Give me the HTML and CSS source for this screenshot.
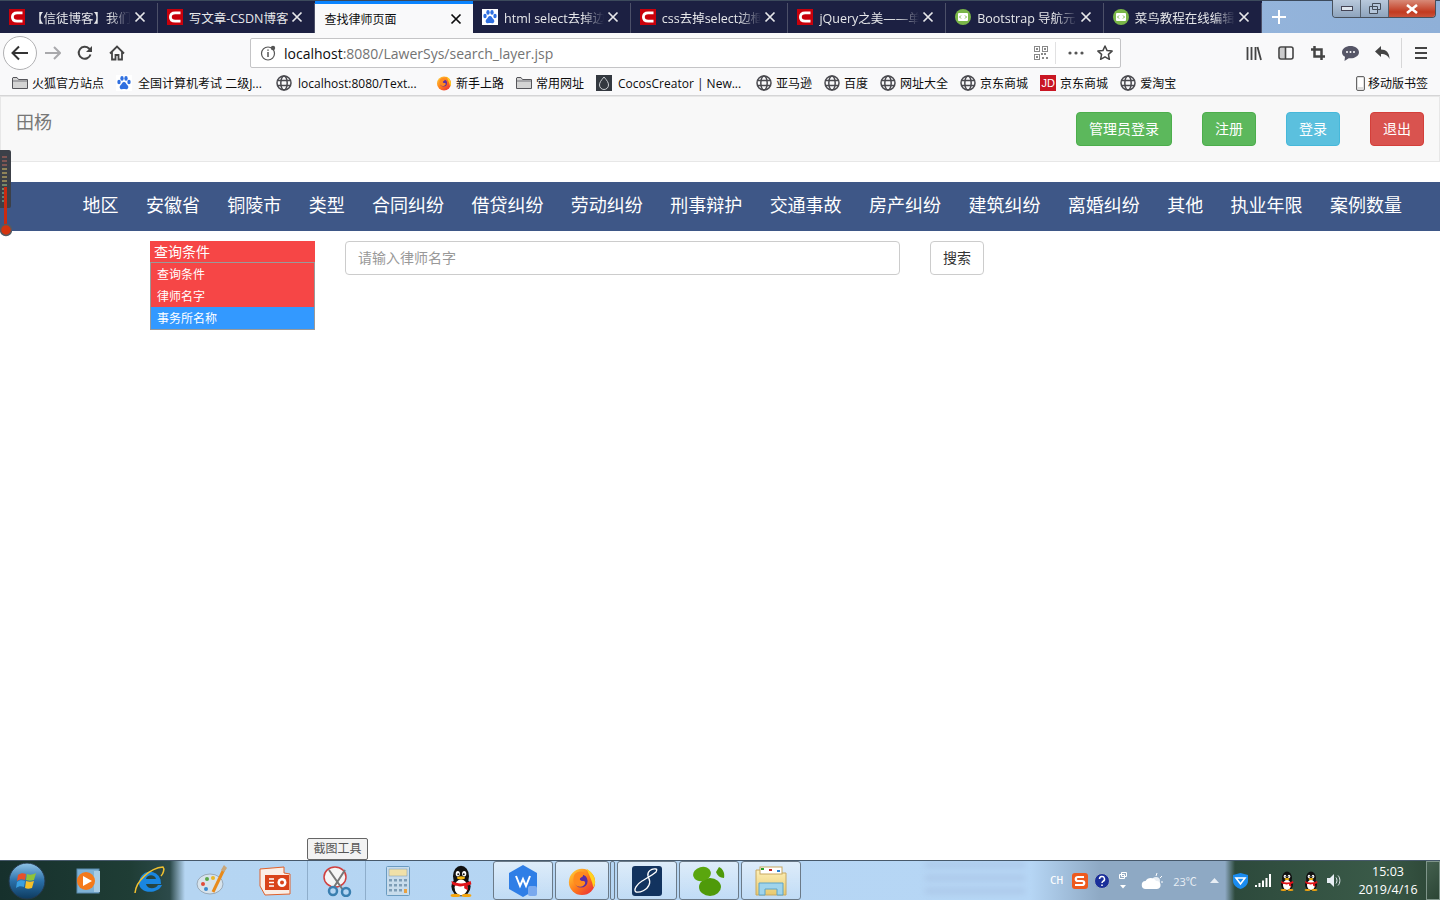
FILE: index.html
```html
<!DOCTYPE html>
<html lang="en">
<head>
    <meta charset="UTF-8">
    <title>查找律师页面</title>
    <link rel="stylesheet" href="styles.css">
</head>
<body>
    <svg class="sprite" xmlns="http://www.w3.org/2000/svg">
        <defs>
            <linearGradient id="orbGrad" x1="0" y1="0" x2="0" y2="1"><stop offset="0" stop-color="#8fc4e8"/><stop offset=".5" stop-color="#2a6fa8"/><stop offset="1" stop-color="#0d3a5e"/></linearGradient>
            <linearGradient id="foxGrad" x1="0" y1="0" x2="1" y2="1"><stop offset="0" stop-color="#ffd83a"/><stop offset=".5" stop-color="#ff7a1a"/><stop offset="1" stop-color="#e6213f"/></linearGradient>
            <linearGradient id="folderGrad" x1="0" y1="0" x2="0" y2="1"><stop offset="0" stop-color="#fdf0b8"/><stop offset="1" stop-color="#e8c96e"/></linearGradient>
        </defs>
        <symbol id="close" viewBox="0 0 12 12"><path d="M1.500 1.500l9 9M10.500 1.500l-9 9" fill="none" stroke="currentColor" stroke-width="1.700"/></symbol>
        <symbol id="csdn" viewBox="0 0 16 16"><rect width="16" height="16" fill="#c9000b"/><path d="M13.500 3.800H8.200C5 3.800 3.400 5.600 3.400 8s1.600 4.200 4.800 4.200h5.300" fill="none" stroke="#fff" stroke-width="2.800"/></symbol>
        <symbol id="paw" viewBox="0 0 16 16"><rect width="16" height="16" fill="#fff"/><g fill="#2f6fe0"><ellipse cx="3" cy="7" rx="1.700" ry="2.200"/><ellipse cx="6" cy="3.400" rx="1.700" ry="2.300"/><ellipse cx="10" cy="3.400" rx="1.700" ry="2.300"/><ellipse cx="13" cy="7" rx="1.700" ry="2.200"/><path d="M8 7c-2 0-2 2-3.500 3.200C3 11.500 3.600 14.500 6 14.200c1.200-.2 2.800-.2 4 0 2.400.3 3-2.700 1.500-4C10 9 10 7 8 7z"/></g></symbol>
        <symbol id="runoob" viewBox="0 0 16 16"><circle cx="8" cy="8" r="8" fill="#7ab648"/><rect x="3" y="4" width="10" height="8" rx="1" fill="#fff"/><path d="M6 6.500 4.500 8 6 9.500M10 6.500 11.500 8 10 9.500" fill="none" stroke="#7ab648"/></symbol>
        <symbol id="globe" viewBox="0 0 16 16"><g fill="none" stroke="#4a4a4f" stroke-width="1.500"><circle cx="8" cy="8" r="7"/><ellipse cx="8" cy="8" rx="3.200" ry="7"/><path d="M1.500 5.500h13M1.500 10.500h13"/></g></symbol>
        <symbol id="folder" viewBox="0 0 16 16"><path d="M.5 3V13.500h15V4.500H6.500L5 2.500H1z" fill="#d4d4d4" stroke="#55555a"/><path d="M1 6h14" stroke="#77777c"/></symbol>
        <symbol id="firefox" viewBox="0 0 32 32"><circle cx="16" cy="17" r="14" fill="url(#foxGrad)"/><path d="M21 3c5 3 9 8 9 14 0 2-1 5-2 6-1-7-4-12-7-20z" fill="#ffd21f"/><circle cx="15" cy="16" r="7" fill="#5b2fa3"/><path d="M9 8c3-3 8-3 11 0-2 0-3 1-3 3l-3 2c-1 2 1 3 4 3 3 1 1 6-4 6-5 0-8-4-7-9 0-2 1-4 2-5z" fill="#ff8a1e"/></symbol>
        <symbol id="qq" viewBox="0 0 32 40"><ellipse cx="16" cy="14" rx="10" ry="13" fill="#111"/><ellipse cx="16" cy="27" rx="12" ry="12" fill="#111"/><ellipse cx="16" cy="28" rx="8" ry="10" fill="#fff"/><ellipse cx="12" cy="11" rx="2.600" ry="3.400" fill="#fff"/><ellipse cx="20" cy="11" rx="2.600" ry="3.400" fill="#fff"/><circle cx="12.500" cy="11.500" r="1.200" fill="#111"/><circle cx="19.500" cy="11.500" r="1.200" fill="#111"/><ellipse cx="16" cy="16" rx="5" ry="2" fill="#f5b70f"/><path d="M4 20c8 4 16 4 24 0l1 4-5 2 1 6-5-3v-3c-4 1-6 1-9 0-3 0-5-1-6-2z" fill="#e0141a"/><ellipse cx="9" cy="38" rx="6" ry="2" fill="#f5a50f"/><ellipse cx="23" cy="38" rx="6" ry="2" fill="#f5a50f"/></symbol>
    </svg>

    <div class="tabstrip">
        <div class="tabs">
            <div class="tab"><svg class="favicon"><use href="#csdn"/></svg><span class="tab-title">【信徒博客】我们</span><svg class="tab-close"><use href="#close"/></svg></div>
            <div class="tab"><svg class="favicon"><use href="#csdn"/></svg><span class="tab-title plain">写文章-CSDN博客</span><svg class="tab-close"><use href="#close"/></svg></div>
            <div class="tab active"><span class="tab-title plain">查找律师页面</span><svg class="tab-close"><use href="#close"/></svg></div>
            <div class="tab"><svg class="favicon"><use href="#paw"/></svg><span class="tab-title">html select去掉边</span><svg class="tab-close"><use href="#close"/></svg></div>
            <div class="tab"><svg class="favicon"><use href="#csdn"/></svg><span class="tab-title">css去掉select边框</span><svg class="tab-close"><use href="#close"/></svg></div>
            <div class="tab"><svg class="favicon"><use href="#csdn"/></svg><span class="tab-title">jQuery之美——单</span><svg class="tab-close"><use href="#close"/></svg></div>
            <div class="tab"><svg class="favicon"><use href="#runoob"/></svg><span class="tab-title">Bootstrap 导航元</span><svg class="tab-close"><use href="#close"/></svg></div>
            <div class="tab"><svg class="favicon"><use href="#runoob"/></svg><span class="tab-title">菜鸟教程在线编辑</span><svg class="tab-close"><use href="#close"/></svg></div>
        </div>
        <div class="new-tab">
            <svg width="14" height="14" viewBox="0 0 14 14"><path d="M7 0v14M0 7h14" stroke="#fff" stroke-width="2"/></svg>
        </div>
        <div class="win-controls">
            <div class="win-btn"><svg width="12" height="6" viewBox="0 0 12 6"><rect x=".5" y=".5" width="11" height="4" fill="#dfe6ee" stroke="#445"/></svg></div>
            <div class="win-btn"><svg width="12" height="11" viewBox="0 0 12 11"><path d="M3.500.5h8v6h-8zM.5 3.500h8v7h-8z" fill="#b5c6da" stroke="#444c58"/></svg></div>
            <div class="win-btn close"><svg width="14" height="10" viewBox="0 0 14 10"><path d="M2 1l10 8M12 1 2 9" stroke="#fff" stroke-width="2.600"/></svg></div>
        </div>
    </div>

    <div class="toolbar">
        <div class="back-btn">
            <svg width="18" height="16" viewBox="0 0 18 16"><path d="M17 8H2M8 1.500 1.500 8 8 14.500" fill="none" stroke="#333" stroke-width="2"/></svg>
        </div>
        <div class="tool-btn">
            <svg width="16" height="14" viewBox="0 0 16 14"><path d="M0 7h14M9 1l6 6-6 6" fill="none" stroke="#a9a9ac" stroke-width="2"/></svg>
        </div>
        <div class="tool-btn">
            <svg width="16" height="16" viewBox="0 0 16 16"><path d="M13.500 9.500A6 6 0 1 1 12 3.500L14 6" fill="none" stroke="#444" stroke-width="2"/><path d="M15 1v6H9z" fill="#444"/></svg>
        </div>
        <div class="tool-btn">
            <svg width="16" height="16" viewBox="0 0 16 16"><path d="M1 8.500 8 1.500l7 7M3 7v7.500h3.500V10h3v4.500H13V7" fill="none" stroke="#444" stroke-width="1.800"/></svg>
        </div>
        <div class="urlbar">
            <svg class="info-icon" width="16" height="16" viewBox="0 0 16 16"><circle cx="8" cy="8.500" r="6.500" fill="none" stroke="#555" stroke-width="1.200"/><path d="M8 7v5M8 4.500v1.200" stroke="#555" stroke-width="1.500"/><circle cx="13" cy="3" r="2.200" fill="#555"/></svg>
            <div class="url"><span class="host">localhost</span>:8080/LawerSys/search_layer.jsp</div>
            <svg width="14" height="14" viewBox="0 0 14 14"><g fill="none" stroke="#888"><rect x=".5" y=".5" width="5" height="5"/><rect x="8.500" y=".5" width="5" height="5"/><rect x=".5" y="8.500" width="5" height="5"/></g><g fill="#888"><rect x="2" y="2" width="2" height="2"/><rect x="10" y="2" width="2" height="2"/><rect x="2" y="10" width="2" height="2"/><rect x="7" y="7" width="2" height="2"/><rect x="10" y="7" width="2" height="2"/><rect x="8" y="11" width="2" height="2"/><rect x="12" y="11" width="2" height="2"/></g></svg>
            <div class="url-sep"></div>
            <svg class="dots" width="16" height="4" viewBox="0 0 16 4"><circle cx="2" cy="2" r="1.600" fill="#555"/><circle cx="8" cy="2" r="1.600" fill="#555"/><circle cx="14" cy="2" r="1.600" fill="#555"/></svg>
            <svg width="16" height="16" viewBox="0 0 16 16"><path d="M8 1l2.100 4.600 5 .5-3.700 3.300 1 4.900L8 11.800l-4.400 2.500 1-4.900L.9 6.100l5-.5z" fill="none" stroke="#444" stroke-width="1.500" stroke-linejoin="round"/></svg>
        </div>
        <div class="tool-right">
            <div class="tool-btn"><svg width="16" height="15" viewBox="0 0 16 15"><path d="M1.500 1v13M5.500 1v13M9.500 1v13M11.500 1l3.500 13" stroke="#444" stroke-width="1.800" fill="none"/></svg></div>
            <div class="tool-btn"><svg width="16" height="14" viewBox="0 0 16 14"><rect x="1" y="1" width="14" height="12" rx="2" fill="none" stroke="#444" stroke-width="1.600"/><rect x="2" y="2" width="5" height="10" fill="#444" opacity=".25"/><path d="M7.500 1v12" stroke="#444" stroke-width="1.600"/></svg></div>
            <div class="tool-btn"><svg width="14" height="14" viewBox="0 0 14 14"><path d="M3.500 0v10.500H14M0 3.500h10.500V14" fill="none" stroke="#444" stroke-width="2.500"/></svg></div>
            <div class="tool-btn"><svg width="17" height="15" viewBox="0 0 17 15"><path d="M8.500 0C4 0 0 2.600 0 6.200c0 2 1.200 3.500 3 4.600L2.500 15l4.200-2.800c.6.100 1.200.1 1.800.1 4.500 0 8.500-2.600 8.500-6.100S13 0 8.500 0z" fill="#556"/><circle cx="5" cy="6" r="1" fill="#fff"/><circle cx="8.500" cy="6" r="1" fill="#fff"/><circle cx="12" cy="6" r="1" fill="#fff"/></svg></div>
            <div class="tool-btn"><svg width="15" height="14" viewBox="0 0 15 14"><path d="M6 0v3.500c5 0 8.500 3 8.500 9.500-1.500-3.500-4-5-8.500-5V11L0 5.500z" fill="#444"/></svg></div>
            <div class="tool-divider"></div>
            <div class="tool-btn"><svg width="14" height="12" viewBox="0 0 14 12"><path d="M1 1h12M1 6h12M1 11h12" stroke="#444" stroke-width="2"/></svg></div>
        </div>
    </div>

    <div class="bookmarks">
        <div class="bm"><svg class="bm-icon"><use href="#folder"/></svg>火狐官方站点</div>
        <div class="bm long"><svg class="bm-icon"><use href="#paw"/></svg>全国计算机考试 二级J...</div>
        <div class="bm long"><svg class="bm-icon"><use href="#globe"/></svg>localhost:8080/Text...</div>
        <div class="bm"><svg class="bm-icon"><use href="#firefox"/></svg>新手上路</div>
        <div class="bm"><svg class="bm-icon"><use href="#folder"/></svg>常用网址</div>
        <div class="bm long"><svg class="bm-icon" viewBox="0 0 16 16"><rect width="16" height="16" fill="#33383f"/><path d="M8 2c3 3.500 4.500 5.500 4.500 8a4.500 4.500 0 0 1-9 0C3.500 7.500 5 5.500 8 2z" fill="none" stroke="#c9ccd0"/></svg>CocosCreator | New...</div>
        <div class="bm"><svg class="bm-icon"><use href="#globe"/></svg>亚马逊</div>
        <div class="bm"><svg class="bm-icon"><use href="#globe"/></svg>百度</div>
        <div class="bm"><svg class="bm-icon"><use href="#globe"/></svg>网址大全</div>
        <div class="bm"><svg class="bm-icon"><use href="#globe"/></svg>京东商城</div>
        <div class="bm"><span class="jd">JD</span>京东商城</div>
        <div class="bm"><svg class="bm-icon"><use href="#globe"/></svg>爱淘宝</div>
        <div class="bm mobile"><svg width="9" height="15" viewBox="0 0 9 15"><rect x=".5" y=".5" width="8" height="14" rx="1.500" fill="#ddd" stroke="#666"/><rect x="2" y="2" width="5" height="9" fill="#fff"/></svg>移动版书签</div>
    </div>

    <div class="page">
        <div class="navbar">
            <div class="brand">田杨</div>
            <div class="nav-actions">
                <a class="btn btn-success">管理员登录</a>
                <a class="btn btn-success">注册</a>
                <a class="btn btn-info">登录</a>
                <a class="btn btn-danger">退出</a>
            </div>
        </div>

        <div class="filter-bar">
            <span>地区</span><span>安徽省</span><span>铜陵市</span><span>类型</span><span>合同纠纷</span><span>借贷纠纷</span><span>劳动纠纷</span><span>刑事辩护</span><span>交通事故</span><span>房产纠纷</span><span>建筑纠纷</span><span>离婚纠纷</span><span>其他</span><span>执业年限</span><span>案例数量</span>
        </div>

        <div class="search-row">
            <div class="fake-select">
                <div class="select-head">查询条件</div>
                <div class="select-list">
                    <div class="select-item">查询条件</div>
                    <div class="select-item">律师名字</div>
                    <div class="select-item hover">事务所名称</div>
                </div>
            </div>
            <div class="search-input">请输入律师名字</div>
            <div class="search-btn">搜索</div>
        </div>

        <!-- desktop thermometer gadget sits on top of the browser -->
        <svg class="gadget" width="12" height="88" viewBox="0 0 12 88">
            <rect x="-3" y="0" width="14" height="58" rx="2" fill="#3c4048"/>
            <path d="M2 7h5M2 11h5M2 15h5" stroke="#c56a5e"/>
            <path d="M2 19h5M2 23h5M2 27h5M2 31h5" stroke="#e3c76b"/>
            <path d="M2 35h5M2 39h5" stroke="#a9cf8c"/>
            <path d="M2 43h5M2 47h5M2 51h5" stroke="#7fc6b0"/>
            <rect x="4" y="37" width="3" height="42" fill="#cc2a10"/>
            <circle cx="6" cy="80" r="5.500" fill="#d4340f" stroke="#555b63" stroke-width="1.500"/>
        </svg>

        <div class="tooltip">截图工具</div>
    </div>

    <div class="taskbar">
        <div class="streaks"></div>
        <div class="start">
            <svg width="38" height="38" viewBox="0 0 38 38"><circle cx="19" cy="19" r="18" fill="url(#orbGrad)" stroke="#24384a"/><path d="M10 13c3-2 5-2 8-1l-1 6c-3-1-5-1-8 1z" fill="#e8502a"/><path d="M19 12c3 1 5 1 9-1l-2 7c-3 1-5 1-8 0z" fill="#8fc33a"/><path d="M9 20c3-2 5-2 8-1l-1 6c-3-1-5-1-8 1z" fill="#3a9fe0"/><path d="M18 19c3 1 5 1 8 0l-2 7c-3 1-5 1-7 0z" fill="#f5c02a"/></svg>
        </div>
        <div class="slot"><svg width="28" height="28" viewBox="0 0 28 28"><rect x="3" y="2" width="22" height="24" fill="#7fb2d6" stroke="#5b8bb0"/><rect x="20" y="4" width="6" height="21" fill="#a8cde6"/><circle cx="12" cy="14" r="9" fill="#f47a1c"/><path d="M9 9l9 5-9 5z" fill="#fff"/></svg></div>
        <div class="slot"><svg width="32" height="32" viewBox="0 0 32 32"><path d="M5 17a11 11 0 0 1 21.500-2.500L27 19H12c1 5 9 6 12 1h4c-4 10-24 9-23-3zM12 14h10c-1-5-9-5-10 0z" fill="#1a86e0" fill-rule="evenodd"/><path d="M1 28C2 16 16 3 29 2c2 2 0 7-2 9" fill="none" stroke="#f0c030" stroke-width="1.500"/></svg></div>
        <div class="slot"><svg width="32" height="32" viewBox="0 0 32 32"><ellipse cx="14" cy="19" rx="13" ry="10" fill="#d7e3ec" stroke="#9aaab8"/><circle cx="7" cy="19" r="2" fill="#e04a3a"/><circle cx="11" cy="14" r="2" fill="#5aa84a"/><circle cx="17" cy="13" r="2" fill="#e8b82a"/><circle cx="10" cy="24" r="2" fill="#3a8ad0"/><path d="M29 2 17 27" stroke="#e88a1a" stroke-width="3"/><path d="M28 0l3 3-3 4-3-2z" fill="#c9a77a"/></svg></div>
        <div class="slot ppt"><svg width="32" height="30" viewBox="0 0 32 30"><path d="M1 3l24-2v6l6 1v20L6 29 1 20z" fill="#fbeee6" stroke="#e0602a"/><rect x="6" y="9" width="24" height="15" fill="#d9431a"/><path d="M10 13h5M10 16.500h5M10 20h5" stroke="#fff" stroke-width="1.500"/><circle cx="23" cy="16.500" r="4.500" fill="#fff"/><circle cx="23" cy="16.500" r="2" fill="#d9431a"/></svg></div>
        <div class="slot divided"><svg width="30" height="32" viewBox="0 0 30 32"><ellipse cx="13" cy="12" rx="11" ry="10" fill="#f5f5f5" stroke="#d04040" stroke-width="1.500"/><path d="M7 5l14 20M23 5 12 22" stroke="#777" stroke-width="2"/><circle cx="11" cy="26" r="4" fill="none" stroke="#3a7fb0" stroke-width="2.500"/><circle cx="24" cy="27" r="4" fill="none" stroke="#3a7fb0" stroke-width="2.500"/></svg></div>
        <div class="slot calc"><svg width="24" height="30" viewBox="0 0 24 30"><rect x=".5" y=".5" width="23" height="29" rx="1" fill="#c8dcec" stroke="#6a9bc0"/><rect x="3" y="3" width="18" height="7" fill="#f0e0a8" stroke="#7a98b0" stroke-width=".5"/><g fill="#7e9db6"><rect x="3" y="13" width="3" height="2.500"/><rect x="8" y="13" width="3" height="2.500"/><rect x="13" y="13" width="3" height="2.500"/><rect x="18" y="13" width="3" height="2.500"/><rect x="3" y="18" width="3" height="2.500"/><rect x="8" y="18" width="3" height="2.500"/><rect x="13" y="18" width="3" height="2.500"/><rect x="18" y="18" width="3" height="2.500"/><rect x="3" y="23" width="3" height="2.500"/><rect x="8" y="23" width="3" height="2.500"/><rect x="13" y="23" width="3" height="2.500"/></g><rect x="18" y="23" width="3" height="4" fill="#e8a040"/></svg></div>
        <div class="slot qq-slot"><svg width="26" height="32"><use href="#qq"/></svg></div>
        <div class="pinned">
            <svg width="30" height="32" viewBox="0 0 30 32"><path d="M15 0l14 8v16l-14 8-14-8V8z" fill="#2f7ee6"/><path d="M8 11l4 10 3-7 3 7 4-10" fill="none" stroke="#fff" stroke-width="2"/><rect x="20" y="21" width="9" height="10" rx="2" fill="#7aa9ee"/></svg>
        </div>
        <div class="pinned narrow">
            <svg width="30" height="32"><use href="#firefox"/></svg>
        </div>
        <div class="pinned-sliver"></div>
        <div class="pinned">
            <svg width="30" height="30" viewBox="0 0 30 30"><rect width="30" height="30" rx="3" fill="#12335f"/><path d="M24 3c-5-1-9 3-8 7 1 3 3 5 1 9-2 5-9 8-13 7-3-2 1-8 6-11 5-3 12-7 14-9 1-2 1-3 0-3z" fill="none" stroke="#fff" stroke-width="1.300"/></svg>
        </div>
        <div class="pinned">
            <svg width="32" height="30" viewBox="0 0 32 30"><ellipse cx="17" cy="21" rx="11" ry="9" fill="#4f9a0a"/><ellipse cx="9" cy="8" rx="9" ry="7" fill="#5aa60e" transform="rotate(-15 9 8)"/><path d="M26 1c4 2 6 6 5 11-4 0-7-3-8-6z" fill="#4f9a0a"/></svg>
        </div>
        <div class="pinned">
            <svg width="32" height="30" viewBox="0 0 32 30"><path d="M1 4h11l2 3h17v22H1z" fill="url(#folderGrad)" stroke="#c8a860"/><rect x="5" y="1" width="22" height="7" fill="#fff" stroke="#c8a860"/><rect x="6" y="2" width="3" height="2" fill="#2aa02a"/><rect x="14" y="3" width="3" height="2" fill="#c02a2a"/><rect x="22" y="4" width="3" height="2" fill="#2a80d0"/><path d="M4 17h24v12h-6v-6H10v6H4z" fill="#9fd4ec" stroke="#5da4c8"/></svg>
        </div>
        <div class="tray">
            <div class="tray-item ch">CH</div>
            <div class="tray-item"><svg width="16" height="16" viewBox="0 0 16 16"><rect width="16" height="16" rx="3" fill="#ee5a1e"/><path d="M12 4H6C3 4 3 8 6 8h4c3 0 3 4 0 4H3" fill="none" stroke="#fff" stroke-width="2.200"/></svg></div>
            <div class="tray-item"><svg width="16" height="16" viewBox="0 0 16 16"><circle cx="8" cy="8" r="7.500" fill="#1a2f9a" stroke="#9fb3c4"/><path d="M5.500 6a2.500 2.500 0 1 1 3.500 2.300C8.300 8.700 8 9 8 10M8 11.500v1.500" fill="none" stroke="#fff" stroke-width="1.500"/></svg></div>
            <div class="tray-item small"><svg width="8" height="18" viewBox="0 0 8 18"><path d="M2.500.5h5v4h-5zM.5 2.500h5v4h-5z" fill="#91a9c2" stroke="#fff"/><path d="M1 13h6l-3 3.500z" fill="#fff"/></svg></div>
            <div class="tray-item wide"><svg width="22" height="18" viewBox="0 0 22 18"><path d="M15 4l1-3M19 6l2-2M20 10h2" stroke="#fff"/><circle cx="15" cy="9" r="4" fill="#e8eef4"/><path d="M5 17a4 4 0 0 1-.5-8A6 6 0 0 1 15 9a4 4 0 0 1 1 8z" fill="#fff"/></svg></div>
            <div class="tray-item temp">23℃</div>
            <div class="tray-item caret"><svg width="9" height="5" viewBox="0 0 9 5"><path d="M0 5l4.500-5L9 5z" fill="#e8eef4"/></svg></div>
            <div class="tray-item"><svg width="15" height="16" viewBox="0 0 15 16"><path d="M7.500 0 15 2v6c0 4-4 7-7.500 8C4 15 0 12 0 8V2z" fill="#1a8cf0"/><path d="M3 5h9L7.500 11z" fill="none" stroke="#fff" stroke-width="1.600"/></svg></div>
            <div class="tray-item signal"><svg width="16" height="13" viewBox="0 0 16 13"><path d="M0 11h2v2H0zM3.500 9h2v4h-2zM7 6.500h2V13H7zM10.500 4h2v9h-2zM14 0h2v13h-2z" fill="#fff"/></svg></div>
            <div class="tray-item signal"><svg width="16" height="20"><use href="#qq"/></svg></div>
            <div class="tray-item signal"><svg width="16" height="20"><use href="#qq"/></svg></div>
            <div class="tray-item"><svg width="14" height="13" viewBox="0 0 14 13"><path d="M0 4h3l4-4v13l-4-4H0z" fill="#e8eef4"/><path d="M9 3.500c1.300 1.500 1.300 4.500 0 6M11 1.500c2.500 2.500 2.500 7.500 0 10" fill="none" stroke="#e8eef4"/></svg></div>
            <div class="clock"><div>15:03</div><div>2019/4/16</div></div>
            <div class="show-desktop"></div>
        </div>
    </div>
</body>
</html>
```

FILE: styles.css
```css
* {
    box-sizing: border-box;
}
html, body {
    height: 100%;
}
body {
    margin: 0;
    display: flex;
    flex-direction: column;
    overflow: hidden;
    background: white;
    font-family: "Open Sans", "Noto Sans CJK SC", sans-serif;
}
svg {
    flex: none;
    display: block;
}
.sprite {
    position: absolute;
    width: 0;
    height: 0;
}

/* tab strip */
.tabstrip {
    height: 33px;
    flex: none;
    display: flex;
    background: linear-gradient(90deg, #6f8fb8, #a9c6e8 30%, #8fb0d8);
    border-top: 1px solid #3c4a5c;
}
.tabs {
    display: flex;
    padding-top: 2px;
    background: #1c2042;
}
.tab {
    width: 157.7px;
    display: flex;
    align-items: center;
    padding: 0 11px 2px 9px;
    border-right: 1px solid #4c5068;
    color: #e6e7ea;
    font-size: 12.5px;
}
.tab.active {
    margin-top: -2px;
    padding-bottom: 0;
    border-top: 3px solid #0a84ff;
    border-right: none;
    background: #f9f9fa;
    color: #0c0c0d;
    height: 32px;
}
.favicon {
    width: 16px;
    height: 16px;
    margin-right: 6px;
}
.tab-title {
    flex: 1;
    min-width: 0;
    overflow: hidden;
    white-space: nowrap;
    -webkit-mask-image: linear-gradient(90deg, black 78%, transparent);
}
.tab-title.plain {
    -webkit-mask-image: none;
}
.tab.active .tab-title {
    font-size: 12px;
}
.tab-close {
    width: 12px;
    height: 12px;
    margin-left: 3px;
}

.new-tab {
    width: 34px;
    display: flex;
    align-items: center;
    justify-content: center;
}
.win-controls {
    margin-left: auto;
    margin-right: 4px;
    margin-top: -1px;
    height: 18px;
    display: flex;
    border: 1px solid #47505c;
    border-top: none;
    border-radius: 0 0 4px 4px;
    overflow: hidden;
}
.win-btn {
    width: 28px;
    display: flex;
    align-items: center;
    justify-content: center;
    border-right: 1px solid #56606c;
    background: linear-gradient(#b9c9dc, #8ea4bd);
}
.win-btn.close {
    width: 46px;
    border-right: none;
    background: linear-gradient(#d88a78, #c23a20 70%, #c9523a);
}

/* toolbar */
.toolbar {
    height: 38px;
    flex: none;
    display: flex;
    align-items: center;
    padding: 2px 0 0 3px;
    background: #f9f9fa;
}
.back-btn {
    width: 34px;
    height: 34px;
    display: flex;
    align-items: center;
    justify-content: center;
    border: 1px solid #b1b1b3;
    border-radius: 50%;
    background: #fff;
}
.tool-btn {
    width: 32px;
    height: 32px;
    display: flex;
    align-items: center;
    justify-content: center;
}
.urlbar {
    width: 871px;
    height: 30px;
    margin-left: 117px;
    display: flex;
    align-items: center;
    padding: 0 7px 0 9px;
    background: #fff;
    border: 1px solid #c4c4c6;
    border-radius: 2px;
}
.url {
    flex: 1;
    margin-left: 8px;
    font-size: 14px;
    color: #737373;
    white-space: nowrap;
}
.host {
    color: #0c0c0d;
}
.url-sep {
    width: 1px;
    height: 22px;
    margin: 0 12px 0 7px;
    background: #e1e1e2;
}
.dots {
    margin-right: 13px;
}
.tool-right {
    margin-left: auto;
    margin-right: 3px;
    display: flex;
    align-items: center;
}
.tool-divider {
    width: 1px;
    height: 30px;
    margin: 0 3px;
    background: #d7d7d8;
}

/* bookmarks */
.bookmarks {
    height: 25px;
    flex: none;
    display: flex;
    align-items: center;
    gap: 12px;
    padding-left: 12px;
    padding-right: 12px;
    background: #f9f9fa;
    border-bottom: 1px solid #d5d5d6;
    font-size: 12px;
    color: #0c0c0d;
}
.bm {
    display: flex;
    align-items: center;
    gap: 4px;
    white-space: nowrap;
}
.bm.long {
    width: 148px;
    gap: 6px;
}
.bm-icon {
    width: 16px;
    height: 16px;
}
.jd {
    width: 16px;
    height: 16px;
    background: #c91623;
    color: #fff;
    font-size: 11px;
    line-height: 16px;
    text-align: center;
    font-family: "Liberation Sans", sans-serif;
}
.mobile {
    margin-left: auto;
    gap: 3px;
}

/* page */
.page {
    flex: 1;
    position: relative;
    font-family: "Liberation Sans", "Noto Sans CJK SC", sans-serif;
}
.navbar {
    height: 66px;
    display: flex;
    justify-content: space-between;
    padding: 15px 15px 0;
    background: #f8f8f8;
    border: 1px solid #e7e7e7;
    margin-bottom: 20px;
}
.brand {
    margin-top: 1px;
    font-size: 18px;
    line-height: 20px;
    color: #777;
}
.nav-actions {
    display: flex;
    gap: 30px;
    height: 34px;
}
.btn {
    padding: 0 12px;
    font-size: 14px;
    line-height: 32px;
    color: #fff;
    border: 1px solid;
    border-radius: 4px;
}
.btn-success {
    background: #5cb85c;
    border-color: #4cae4c;
}
.btn-info {
    background: #5bc0de;
    border-color: #46b8da;
}
.btn-danger {
    background: #d9534f;
    border-color: #d43f3a;
}
.filter-bar {
    height: 49px;
    display: flex;
    align-items: center;
    gap: 27.4px;
    padding: 0 0 6px 82.5px;
    background: #3e5787;
    color: #fff;
    font-size: 18px;
}
.search-row {
    display: flex;
    align-items: flex-start;
    gap: 30px;
    padding: 10px 0 0 150px;
}
.fake-select {
    width: 165px;
    font-size: 12px;
    color: #fff;
}
.select-head {
    height: 21px;
    padding-left: 4px;
    background: #f64646;
    font-size: 14px;
    line-height: 23px;
}
.select-list {
    border: 1px solid #999;
}
.select-item {
    height: 22px;
    padding-left: 6px;
    background: #f64646;
    line-height: 24px;
}
.select-item.hover {
    background: #3399ff;
}
.search-input {
    width: 555px;
    height: 34px;
    padding-left: 12px;
    border: 1px solid #ccc;
    border-radius: 4px;
    font-size: 14px;
    line-height: 32px;
    color: #999;
}
.search-btn {
    width: 54px;
    height: 34px;
    border: 1px solid #ccc;
    border-radius: 4px;
    text-align: center;
    font-size: 14px;
    line-height: 32px;
    color: #333;
}
.gadget {
    position: absolute;
    left: 0;
    top: 54px;
}
.tooltip {
    position: absolute;
    left: 307px;
    bottom: 0;
    width: 61px;
    height: 22px;
    border: 1px solid #666;
    border-radius: 2px;
    background: #f2f2f2;
    color: #555;
    font-size: 12px;
    line-height: 20px;
    text-align: center;
}

/* windows taskbar */
.taskbar {
    height: 40px;
    flex: none;
    position: relative;
    overflow: hidden;
    display: flex;
    align-items: center;
    border-top: 1px solid #47596b;
    background: linear-gradient(90deg, #16302c 0, #1f3d35 130px, #2c4a4a 170px, #b5d5f2 185px, #b6d6f5 1030px, #8ea9c4 1100px, #8ea9c4 1225px, #2d4a3c 1235px, #3a5a48 1380px, #2c4535 1440px);
}
/* blurred desktop showing through the glass */
.streaks {
    position: absolute;
    left: 925px;
    top: 2px;
    width: 100px;
    height: 36px;
    background: repeating-linear-gradient(#8f9fc4 0 4px, transparent 4px 13px);
    filter: blur(3px);
    opacity: .35;
}
.start {
    width: 57px;
    padding-left: 8px;
    flex: none;
}
.slot {
    width: 62px;
    height: 100%;
    flex: none;
    display: flex;
    align-items: center;
    justify-content: center;
}
.slot.ppt {
    width: 64px;
}
.slot.divided {
    width: 59px;
    border-left: 1px solid rgba(70, 100, 130, .35);
    border-right: 1px solid rgba(70, 100, 130, .35);
}
.slot.calc {
    width: 64px;
}
.slot.qq-slot {
    width: 61px;
}
.pinned {
    width: 60px;
    height: 39px;
    flex: none;
    margin-right: 2px;
    display: flex;
    align-items: center;
    justify-content: center;
    border: 1px solid #6b7a88;
    border-radius: 3px;
    background: linear-gradient(rgba(255, 255, 255, .55), rgba(255, 255, 255, .15));
}
.slot + .pinned {
    margin-left: 2px;
}
.pinned.narrow {
    width: 54px;
    margin-right: 1px;
}
.pinned-sliver {
    width: 5px;
    height: 39px;
    flex: none;
    margin-right: 2px;
    border: 1px solid #6b7a88;
    border-radius: 2px;
}
.tray {
    margin-left: auto;
    height: 100%;
    display: flex;
    align-items: center;
    color: #fff;
}
.tray-item {
    width: 22px;
    height: 100%;
    display: flex;
    align-items: center;
    justify-content: center;
}
.tray-item.ch {
    font-family: "DejaVu Sans Mono", monospace;
    font-size: 11px;
    padding-right: 3px;
}
.tray-item.small {
    width: 20px;
}
.tray-item.wide {
    width: 38px;
}
.tray-item.temp {
    width: 28px;
    font-size: 11px;
    color: #e8eef4;
}
.tray-item.caret {
    width: 30px;
}
.tray-item.signal {
    width: 24px;
}
.clock {
    width: 81px;
    padding-left: 5px;
    text-align: center;
    font-family: "Open Sans", sans-serif;
    font-size: 12.5px;
    line-height: 18px;
}
.show-desktop {
    width: 14px;
    height: 39px;
    border: 1px solid #7f958a;
    background: linear-gradient(135deg, #44604f, #2c4535);
}
```
